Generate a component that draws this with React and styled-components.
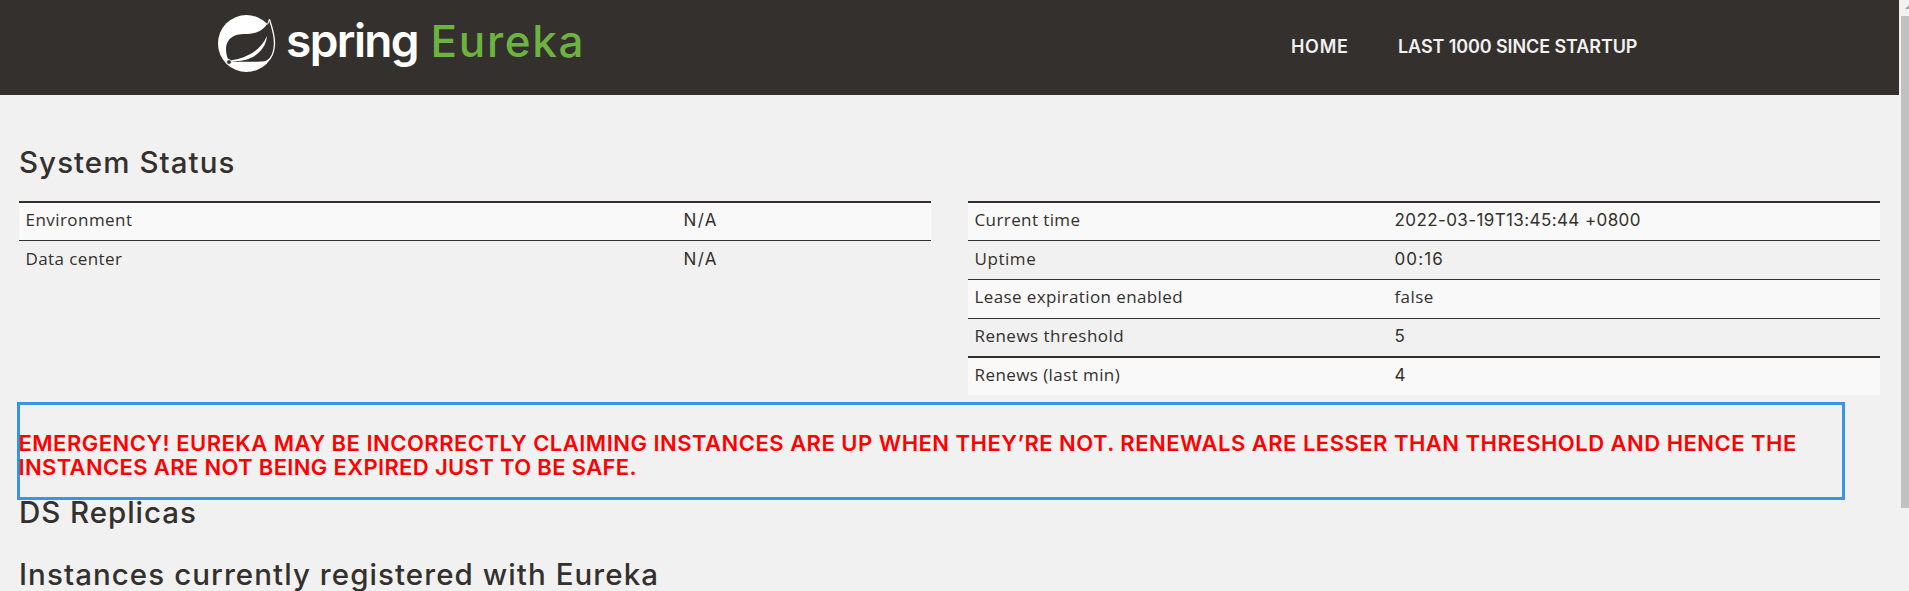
import React from 'react';
import styled, { createGlobalStyle } from 'styled-components';

const ink = '#34302d';

const GlobalStyle = createGlobalStyle`
  body {
    margin: 0;
    background: #f1f1f1;
    color: ${ink};
    font-family: Inter, "Liberation Sans", sans-serif;
    overflow: hidden;
  }
`;

const Page = styled.div`
  display: flex;
  height: 591px;
  overflow: hidden;
`;

const Main = styled.main`
  flex: none;
  width: 1899px;
`;

const Header = styled.header`
  display: grid;
  grid-template-columns: 1073px 107px auto;
  height: 95px;
  padding-left: 218px;
  background: ${ink};
`;

const Brand = styled.div`
  display: flex;
`;

const Leaf = styled.svg`
  flex: none;
  width: 58px;
  height: 58px;
  margin-top: 14px;
`;

const Wordmark = styled.div`
  display: grid;
  grid-template-columns: 144.5px auto;
  align-items: baseline;
  height: 80px;
  padding-left: 10px;
  line-height: 80px;
  white-space: nowrap;
`;

const Spring = styled.span`
  color: #fff;
  font-size: 46px;
  font-weight: 600;
  letter-spacing: -1.6px;
`;

const Product = styled.span`
  color: #6db33f;
  font-size: 44px;
  font-weight: 500;
  letter-spacing: 1.7px;
`;

const NavLink = styled.a`
  color: #f1f1f1;
  font-size: 18px;
  font-weight: 600;
  line-height: 93px;
  letter-spacing: ${(p) => p.$track}px;
  white-space: nowrap;
`;

const Content = styled.div`
  padding: 51px 19px 0;
`;

const Heading = styled.h1`
  margin: ${(p) => p.$top || 0}px 0 0;
  font-size: 29.5px;
  font-weight: 500;
  line-height: 32px;
  letter-spacing: ${(p) => p.$track}px;
`;

const Columns = styled.div`
  display: grid;
  grid-template-columns: 912px 912px;
  gap: 37px;
  align-items: start;
  margin-top: 23px;
`;

const Row = styled.div`
  box-sizing: border-box;
  display: grid;
  grid-template-columns: ${(p) => p.$split}px 1fr;
  height: ${(p) => p.$height || 39}px;
  padding: ${(p) => (p.$heavy || p.$raised ? 4 : 5)}px 0 0 6.5px;
  border-top: ${(p) => (p.$heavy ? 2 : 1)}px solid ${ink};
  background: ${(p) => (p.$striped ? '#f9f9f9' : 'transparent')};
`;

const Cell = styled.span`
  font: 17px/25px "Open Sans", "Liberation Sans", sans-serif;
  letter-spacing: ${(p) => p.$track}px;
  white-space: nowrap;
`;

const Figure = styled(Cell)`
  font-family: Inter, "Liberation Sans", sans-serif;
  line-height: 27px;
`;

const Warning = styled.div`
  box-sizing: border-box;
  width: 1828px;
  height: 98px;
  margin: 7px 0 0 -2px;
  padding-top: 26px;
  border: 3px solid #3794e6;
`;

const WarningLine = styled.span`
  display: block;
  margin-left: -1.5px;
  color: #f00;
  font-size: 22px;
  font-weight: 600;
  line-height: 24px;
  letter-spacing: ${(p) => p.$track}px;
  white-space: nowrap;
`;

const Scrollbar = styled.div`
  flex: none;
  width: 8px;
  padding-left: 2px;
`;

const ScrollArrow = styled.svg`
  display: block;
  width: 8px;
  height: 16px;
`;

const ScrollThumb = styled.div`
  height: 492px;
  background: #c1c1c1;
`;

const environment = [
  { label: 'Environment', lt: 0.45, value: 'N/A', vt: 1.4, heavy: true },
  { label: 'Data center', lt: 0.4, value: 'N/A', vt: 1.4 },
];

const runtime = [
  { label: 'Current time', lt: 0.4, value: '2022-03-19T13:45:44 +0800', vt: 0.4, heavy: true },
  { label: 'Uptime', lt: 0.55, value: '00:16', vt: 1.1 },
  { label: 'Lease expiration enabled', lt: 0.4, value: 'false', vt: 0.4, text: true, raised: true },
  { label: 'Renews threshold', lt: 0.47, value: '5', vt: 0, height: 38, raised: true },
  { label: 'Renews (last min)', lt: 0.42, value: '4', vt: 0, heavy: true },
];

function StatusTable({ rows, split }) {
  return (
    <div>
      {rows.map((r, i) => {
        const Value = r.text ? Cell : Figure;
        return (
          <Row
            key={r.label}
            $split={split}
            $heavy={r.heavy}
            $raised={r.raised}
            $height={r.height}
            $striped={i % 2 === 0}
          >
            <Cell $track={r.lt}>{r.label}</Cell>
            <Value $track={r.vt}>{r.value}</Value>
          </Row>
        );
      })}
    </div>
  );
}

function SpringLeaf() {
  return (
    <Leaf viewBox="18 18 174 174">
      <circle cx="103.5" cy="106.5" r="85.5" fill="#fff" />
      <path
        d="M47 151C36 119 44 94 66 84C84 75 110 82 134 73C149 67 160 58 168 44L172 32L198 40L198 130L178 145C168 159 158 161 138 161L62 161Z"
        fill={ink}
      />
      <path
        d="M172 34C179 54 190 86 187 114C185 136 178 150 167 158"
        fill="none"
        stroke="#fff"
        strokeWidth="4"
      />
      <path d="M172 34L167 49" stroke="#fff" strokeWidth="3" />
      <path d="M58 157C94 153 145 132 165 84C162 121 132 149 98 156C84 159 70 160 58 161Z" fill="#fff" />
      <circle cx="51" cy="162" r="7" fill={ink} stroke="#fff" strokeWidth="2" />
    </Leaf>
  );
}

export default function App() {
  return (
    <Page>
      <GlobalStyle />
      <Main>
        <Header>
          <Brand>
            <SpringLeaf />
            <Wordmark>
              <Spring>spring</Spring>
              <Product>Eureka</Product>
            </Wordmark>
          </Brand>
          <NavLink $track={0.7}>HOME</NavLink>
          <NavLink $track={-0.1}>LAST 1000 SINCE STARTUP</NavLink>
        </Header>
        <Content>
          <Heading $track={1.05}>System Status</Heading>
          <Columns>
            <StatusTable rows={environment} split={658} />
            <StatusTable rows={runtime} split={420} />
          </Columns>
          <Warning>
            <WarningLine $track={0.49}>
              EMERGENCY! EUREKA MAY BE INCORRECTLY CLAIMING INSTANCES ARE UP WHEN THEY’RE NOT. RENEWALS ARE LESSER THAN
              THRESHOLD AND HENCE THE
            </WarningLine>
            <WarningLine $track={0.35}>INSTANCES ARE NOT BEING EXPIRED JUST TO BE SAFE.</WarningLine>
          </Warning>
          <Heading $top={-4} $track={0.95}>DS Replicas</Heading>
          <Heading $top={30} $track={1.07}>Instances currently registered with Eureka</Heading>
        </Content>
      </Main>
      <Scrollbar>
        <ScrollArrow viewBox="0 0 8 16">
          <path d="M4 9L8 5V9Z" fill="#a3a3a3" />
        </ScrollArrow>
        <ScrollThumb />
      </Scrollbar>
    </Page>
  );
}
